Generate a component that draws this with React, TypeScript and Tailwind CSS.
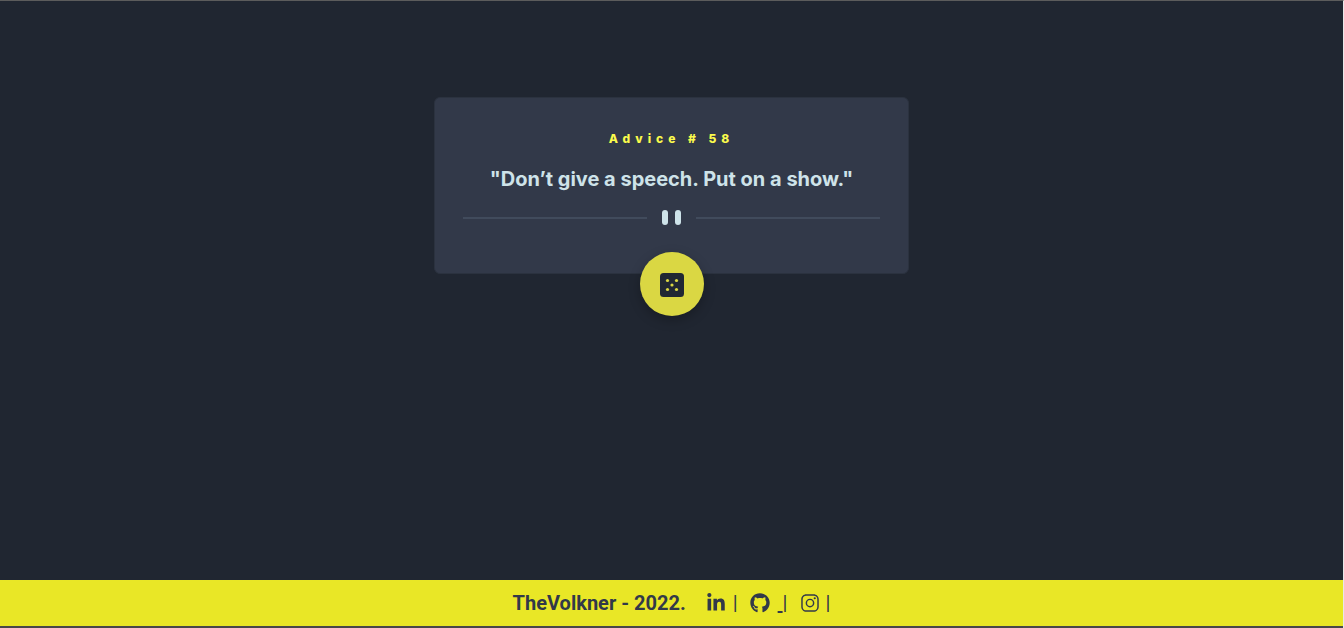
import { FaGithub, FaLinkedinIn } from "react-icons/fa";
import { IoLogoInstagram } from "react-icons/io5";

function Divider() {
  return (
    <div className="mt-4 flex items-center">
      <div className="h-0.5 flex-1 bg-[#414b5c]" />
      <div className="mx-[15px] flex gap-[7px]">
        <span className="h-[15px] w-1.5 rounded-full bg-[#cee3e9]" />
        <span className="h-[15px] w-1.5 rounded-full bg-[#cee3e9]" />
      </div>
      <div className="h-0.5 flex-1 bg-[#414b5c]" />
    </div>
  );
}

function DiceIcon() {
  return (
    <svg width="24" height="24" viewBox="0 0 24 24" aria-hidden="true">
      <rect width="24" height="24" rx="3.5" fill="#202733" />
      <g fill="#dad743">
        <circle cx="7.5" cy="7.5" r="1.6" />
        <circle cx="16.5" cy="7.5" r="1.6" />
        <circle cx="12" cy="12" r="1.6" />
        <circle cx="7.5" cy="16.5" r="1.6" />
        <circle cx="16.5" cy="16.5" r="1.6" />
      </g>
    </svg>
  );
}

export default function App() {
  return (
    <div className="flex min-h-screen flex-col border-t border-r border-t-[#5c5c5c] border-r-[#e8e8e8] bg-[#202631]">
      <main className="flex flex-1 flex-col items-center px-4 pt-24">
        <section className="flex w-full max-w-[475px] flex-col rounded-md border border-[#2b323f] bg-[#323949] px-7 pt-8 text-center font-['Inter',sans-serif]">
          <h1 className="text-xs leading-[18px] font-extrabold tracking-[5px] text-[#fbfb4c]">Advice # 58</h1>
          <p className="mt-4 text-xl leading-[30px] font-bold text-[#cee3e9]">"Don’t give a speech. Put on a show."</p>
          <Divider />
          <button
            type="button"
            aria-label="New advice"
            className="mt-[27px] -mb-[43px] grid size-16 cursor-pointer place-items-center self-center rounded-full bg-[#dad743] pt-0.5 shadow-[0_4px_12px_rgba(0,0,0,0.25)]"
          >
            <DiceIcon />
          </button>
        </section>
      </main>
      <footer className="flex h-12 items-center justify-center border-b-2 border-[#484848] bg-[#e9e726] font-['Roboto',sans-serif] text-xl text-[#323949]">
        <span className="mr-5 font-bold">TheVolkner - 2022.</span>
        <nav className="flex items-center">
          <a href="#linkedin" aria-label="LinkedIn">
            <FaLinkedinIn size={20} />
          </a>
          <span className="ml-[7px]">|</span>
          <a href="#github" aria-label="GitHub" className="ml-3 flex items-center underline decoration-2">
            <FaGithub size={20} />
            <span className="ml-2 whitespace-pre"> </span>
          </a>
          <span>|</span>
          <a href="#instagram" aria-label="Instagram" className="ml-3">
            <IoLogoInstagram size={20} />
          </a>
          <span className="ml-1.5">|</span>
        </nav>
      </footer>
    </div>
  );
}
